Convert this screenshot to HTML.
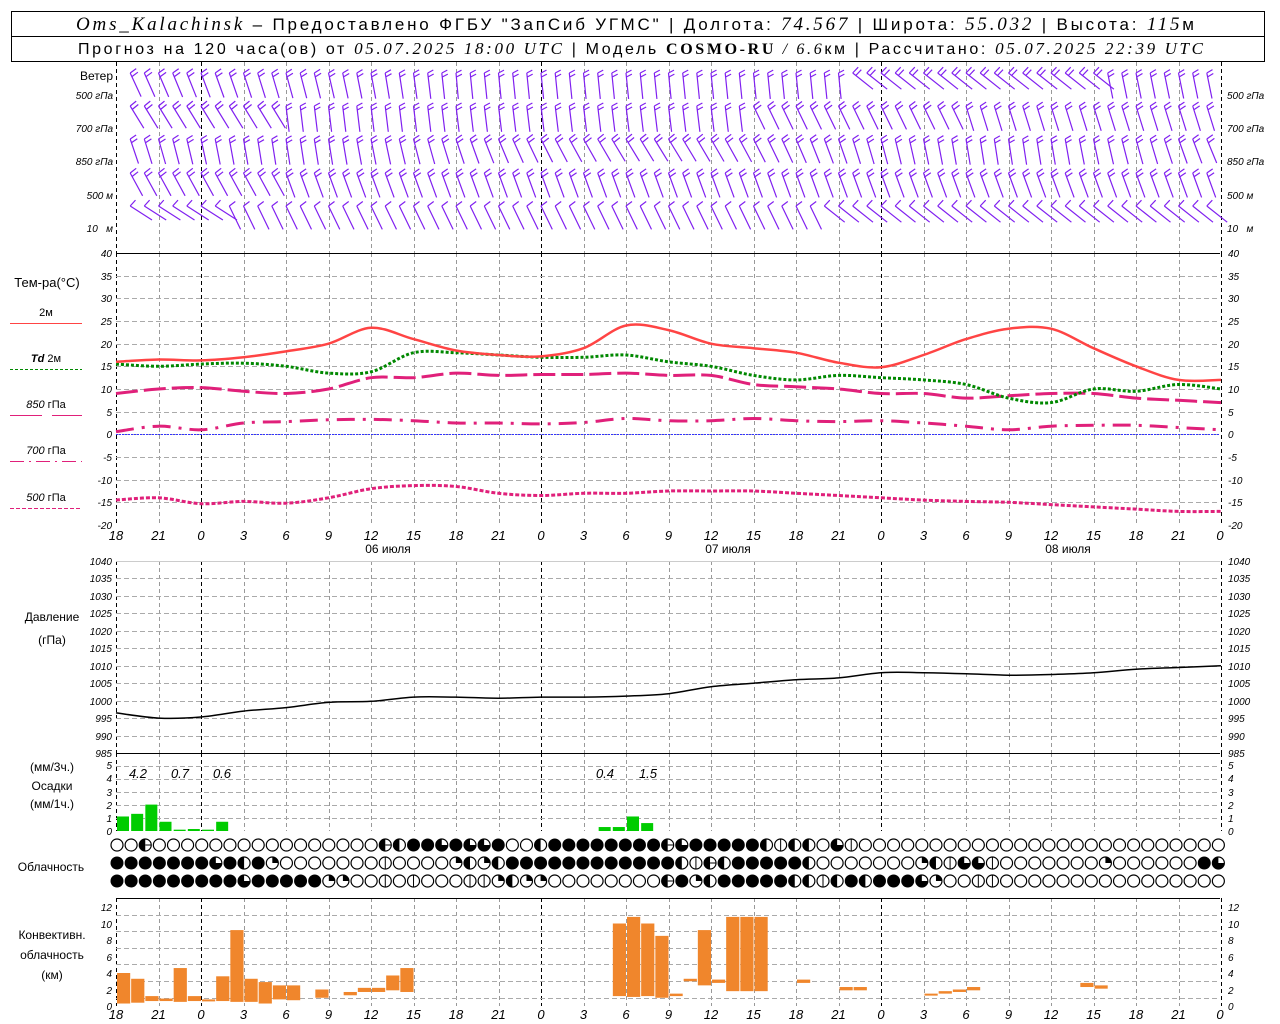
<!DOCTYPE html>
<html><head><meta charset="utf-8"><style>
html,body{margin:0;padding:0;background:#fff;width:1280px;height:1024px;overflow:hidden}
svg{display:block}
.t{font-family:"Liberation Sans",sans-serif;font-size:12px;fill:#000}
.n{font-family:"Liberation Sans",sans-serif;font-style:italic;font-size:10px;fill:#000}
.tl{font-family:"Liberation Sans",sans-serif;font-style:italic;font-size:13px;fill:#000}
.h{font-family:"Liberation Sans",sans-serif;font-size:17px;fill:#000}
.hi{font-family:"Liberation Serif",serif;font-style:italic;font-size:18px;fill:#000}
</style></head><body>
<svg id="s" width="1280" height="1024" xmlns="http://www.w3.org/2000/svg">
<rect x="11.5" y="11.5" width="1253" height="50" fill="none" stroke="#000"/>
<line x1="11" y1="36.5" x2="1265" y2="36.5" stroke="#000"/>
<text x="76" y="30" textLength="1118" lengthAdjust="spacing"><tspan class="hi" style="font-size:19px">Oms_Kalachinsk</tspan><tspan class="h"> – Предоставлено ФГБУ "ЗапСиб УГМС" | Долгота: </tspan><tspan class="hi" style="font-size:19px">74.567</tspan><tspan class="h"> | Широта: </tspan><tspan class="hi" style="font-size:19px">55.032</tspan><tspan class="h"> | Высота: </tspan><tspan class="hi" style="font-size:19px">115</tspan><tspan class="h">м</tspan></text>
<text x="78" y="54" textLength="1125" lengthAdjust="spacing"><tspan class="h" style="font-size:16px">Прогноз на 120 часа(ов) от </tspan><tspan class="hi" style="font-size:17px">05.07.2025 18:00 UTC</tspan><tspan class="h" style="font-size:16px">  | Модель </tspan><tspan class="hi" style="font-weight:bold;font-style:normal;font-size:16px">COSMO-RU</tspan><tspan class="hi" style="font-size:16px"> / 6.6</tspan><tspan class="h" style="font-size:16px">км | Рассчитано: </tspan><tspan class="hi" style="font-size:17px">05.07.2025 22:39 UTC</tspan></text>
<g id="grid"></g><g id="data"></g>
<g class="t" text-anchor="end"><text x="113" y="80">Ветер</text></g>
<g class="n" text-anchor="end"><text x="113" y="99">500 гПа</text><text x="113" y="132">700 гПа</text><text x="113" y="165">850 гПа</text><text x="113" y="199">500 м</text><text x="113" y="232">10 &#160; м</text></g>
<g class="n"><text x="1227" y="99">500 гПа</text><text x="1227" y="132">700 гПа</text><text x="1227" y="165">850 гПа</text><text x="1227" y="199">500 м</text><text x="1227" y="232">10 &#160; м</text></g>
<g class="t" text-anchor="middle"><text x="47" y="287" style="font-size:13px">Тем-ра(°C)</text><text x="46" y="316" style="font-size:11px">2м</text><text x="46" y="362" style="font-size:11px"><tspan font-style="italic" font-weight="bold">Td</tspan>  2м</text><text x="46" y="408" style="font-size:11px"><tspan font-style="italic">850</tspan> гПа</text><text x="46" y="454" style="font-size:11px"><tspan font-style="italic">700</tspan> гПа</text><text x="46" y="501" style="font-size:11px"><tspan font-style="italic">500</tspan> гПа</text>
<text x="52" y="621">Давление</text><text x="52" y="644">(гПа)</text>
<text x="52" y="771">(мм/3ч.)</text><text x="52" y="790">Осадки</text><text x="52" y="808">(мм/1ч.)</text>
<text x="51" y="871">Облачность</text>
<text x="52" y="939">Конвективн.</text><text x="52" y="959">облачность</text><text x="52" y="979">(км)</text></g>
<g stroke-width="1"><line x1="10" y1="323.5" x2="82" y2="323.5" stroke="#f44"/><line x1="10" y1="369.5" x2="82" y2="369.5" stroke="#080" stroke-dasharray="3,2"/><line x1="10" y1="415.5" x2="42" y2="415.5" stroke="#e0207a"/><line x1="52" y1="415.5" x2="82" y2="415.5" stroke="#e0207a"/><line x1="10" y1="461.5" x2="82" y2="461.5" stroke="#e0207a" stroke-dasharray="14,5,2,5"/><line x1="10" y1="508.5" x2="82" y2="508.5" stroke="#e0207a" stroke-dasharray="4,2"/></g>
<g class="n" text-anchor="end">
<text x="112" y="257">40</text><text x="112" y="280">35</text><text x="112" y="302">30</text><text x="112" y="325">25</text><text x="112" y="348">20</text><text x="112" y="370">15</text><text x="112" y="393">10</text><text x="112" y="416">5</text><text x="112" y="438">0</text><text x="112" y="461">-5</text><text x="112" y="484">-10</text><text x="112" y="506">-15</text><text x="112" y="529">-20</text>
<text x="112" y="565">1040</text><text x="112" y="582">1035</text><text x="112" y="600">1030</text><text x="112" y="617">1025</text><text x="112" y="635">1020</text><text x="112" y="652">1015</text><text x="112" y="670">1010</text><text x="112" y="687">1005</text><text x="112" y="705">1000</text><text x="112" y="722">995</text><text x="112" y="740">990</text><text x="112" y="757">985</text>
<text x="112" y="769">5</text><text x="112" y="782">4</text><text x="112" y="796">3</text><text x="112" y="809">2</text><text x="112" y="822">1</text><text x="112" y="835">0</text>
<text x="112" y="911">12</text><text x="112" y="928">10</text><text x="112" y="944">8</text><text x="112" y="961">6</text><text x="112" y="977">4</text><text x="112" y="994">2</text><text x="112" y="1010">0</text>
</g>
<g class="n">
<text x="1228" y="257">40</text><text x="1228" y="280">35</text><text x="1228" y="302">30</text><text x="1228" y="325">25</text><text x="1228" y="348">20</text><text x="1228" y="370">15</text><text x="1228" y="393">10</text><text x="1228" y="416">5</text><text x="1228" y="438">0</text><text x="1228" y="461">-5</text><text x="1228" y="484">-10</text><text x="1228" y="506">-15</text><text x="1228" y="529">-20</text>
<text x="1228" y="565">1040</text><text x="1228" y="582">1035</text><text x="1228" y="600">1030</text><text x="1228" y="617">1025</text><text x="1228" y="635">1020</text><text x="1228" y="652">1015</text><text x="1228" y="670">1010</text><text x="1228" y="687">1005</text><text x="1228" y="705">1000</text><text x="1228" y="722">995</text><text x="1228" y="740">990</text><text x="1228" y="757">985</text>
<text x="1228" y="769">5</text><text x="1228" y="782">4</text><text x="1228" y="796">3</text><text x="1228" y="809">2</text><text x="1228" y="822">1</text><text x="1228" y="835">0</text>
<text x="1228" y="911">12</text><text x="1228" y="928">10</text><text x="1228" y="944">8</text><text x="1228" y="961">6</text><text x="1228" y="977">4</text><text x="1228" y="994">2</text><text x="1228" y="1010">0</text>
</g>
<g class="tl" text-anchor="middle">
<text x="116" y="540">18</text><text x="158.5" y="540">21</text><text x="201" y="540">0</text><text x="243.5" y="540">3</text><text x="286" y="540">6</text><text x="328.5" y="540">9</text><text x="371" y="540">12</text><text x="413.5" y="540">15</text><text x="456" y="540">18</text><text x="498.5" y="540">21</text><text x="541" y="540">0</text><text x="583.5" y="540">3</text><text x="626" y="540">6</text><text x="668.5" y="540">9</text><text x="711" y="540">12</text><text x="753.5" y="540">15</text><text x="796" y="540">18</text><text x="838.5" y="540">21</text><text x="881" y="540">0</text><text x="923.5" y="540">3</text><text x="966" y="540">6</text><text x="1008.5" y="540">9</text><text x="1051" y="540">12</text><text x="1093.5" y="540">15</text><text x="1136" y="540">18</text><text x="1178.5" y="540">21</text><text x="1220" y="540">0</text>
<text x="116" y="1019">18</text><text x="158.5" y="1019">21</text><text x="201" y="1019">0</text><text x="243.5" y="1019">3</text><text x="286" y="1019">6</text><text x="328.5" y="1019">9</text><text x="371" y="1019">12</text><text x="413.5" y="1019">15</text><text x="456" y="1019">18</text><text x="498.5" y="1019">21</text><text x="541" y="1019">0</text><text x="583.5" y="1019">3</text><text x="626" y="1019">6</text><text x="668.5" y="1019">9</text><text x="711" y="1019">12</text><text x="753.5" y="1019">15</text><text x="796" y="1019">18</text><text x="838.5" y="1019">21</text><text x="881" y="1019">0</text><text x="923.5" y="1019">3</text><text x="966" y="1019">6</text><text x="1008.5" y="1019">9</text><text x="1051" y="1019">12</text><text x="1093.5" y="1019">15</text><text x="1136" y="1019">18</text><text x="1178.5" y="1019">21</text><text x="1220" y="1019">0</text>
<text x="138" y="778">4.2</text><text x="180" y="778">0.7</text><text x="222" y="778">0.6</text><text x="605" y="778">0.4</text><text x="648" y="778">1.5</text>
</g>
<g class="t" text-anchor="middle" style="font-size:12px"><text x="388" y="553">06 июля</text><text x="728" y="553">07 июля</text><text x="1068" y="553">08 июля</text></g>
</svg>
<script>
(function(){
var NS="http://www.w3.org/2000/svg",G=document.getElementById('grid'),D=document.getElementById('data');
function el(p,t,a){var e=document.createElementNS(NS,t);for(var k in a)e.setAttribute(k,a[k]);p.appendChild(e);return e;}
function X(h){return 116+h*42.5/3;}
var panels=[[62,253],[253,525],[561,753],[753,831],[898,1006]];
for(var i=0;i<=26;i++){var x=Math.round(X(i*3))+.5,blk=(i%8==2)||i==0||i==26;
 panels.forEach(function(p){el(G,'line',{x1:x,y1:p[0],x2:x,y2:p[1],stroke:blk?'#000':'#999','stroke-dasharray':'4,3'});});}
function hl(y0,y1,n){for(var j=1;j<n;j++){var y=Math.round(y0+(y1-y0)*j/n)+.5;el(G,'line',{x1:116,y1:y,x2:1220,y2:y,stroke:'#aaa','stroke-dasharray':'5,3'});}}
hl(253,525,12);hl(561,753,11);hl(753,831,6);hl(898,1006,6.5);
[253,753,898].forEach(function(y){el(G,'line',{x1:116,y1:y+.5,x2:1220,y2:y+.5,stroke:'#000'});});
el(G,'line',{x1:116,y1:561.5,x2:1220,y2:561.5,stroke:'#ccc'});
el(G,'line',{x1:116,y1:434.5,x2:1220,y2:434.5,stroke:'#33f','stroke-dasharray':'2,1'});
function ty(v){return 253+(40-v)*272/60;}
function line(pts,f,st){var P=pts.map(function(v,i){return [X(i*3),f(v)];});var d='M'+P[0][0]+','+P[0][1];
 for(var i=0;i<P.length-1;i++){var p0=P[Math.max(0,i-1)],p1=P[i],p2=P[i+1],p3=P[Math.min(P.length-1,i+2)];
  d+='C'+(p1[0]+(p2[0]-p0[0])/6).toFixed(1)+','+(p1[1]+(p2[1]-p0[1])/6).toFixed(1)+' '+(p2[0]-(p3[0]-p1[0])/6).toFixed(1)+','+(p2[1]-(p3[1]-p1[1])/6).toFixed(1)+' '+p2[0].toFixed(1)+','+p2[1].toFixed(1);}
 var a={d:d,fill:'none'};for(var k in st)a[k]=st[k];el(D,'path',a);}
line([-14.5,-14,-15.3,-14.8,-15.2,-14,-12,-11.3,-11.5,-13,-13.5,-13,-13,-12.5,-12.5,-12.5,-13,-13.5,-14,-14.5,-14.8,-15,-15.5,-16,-16.5,-17,-17],ty,{stroke:'#e0207a','stroke-width':3,'stroke-dasharray':'4,2'});
line([0.6,1.8,1,2.5,2.8,3.2,3.3,3,2.5,2.5,2.3,2.6,3.5,3,3,3.5,3,2.8,3,2.5,1.8,1,1.8,2,2,1.5,1],ty,{stroke:'#e0207a','stroke-width':3,'stroke-dasharray':'18,8,3,8'});
line([9,10,10.3,9.5,9,10,12.5,12.5,13.5,13,13.2,13.2,13.5,13,13,11,10.5,10,9,9,8,8.5,9,9,8,7.5,7],ty,{stroke:'#e0207a','stroke-width':3,'stroke-dasharray':'22,6'});
line([15.5,15,15.5,15.7,15,13.5,13.8,18,18,17.5,17,17,17.5,16,15,13,12,13,12.5,12,11,8,7,10,9.5,11,10],ty,{stroke:'#080','stroke-width':3,'stroke-dasharray':'3,2'});
line([16,16.5,16.3,17,18.3,20,23.5,21,18.5,17.5,17.2,19,24,23,20,19,18,15.8,14.8,17.5,21,23.3,23.3,19,15,12,12],ty,{stroke:'#f44','stroke-width':2.5});
line([996.5,995,995.3,997,998,999.5,999.8,1001,1001,1000.7,1001,1001,1001.3,1002,1004,1005,1006,1006.5,1008,1008,1007.7,1007.3,1007.5,1008,1009,1009.5,1010],function(v){return 561+(1040-v)*192/55;},{stroke:'#000','stroke-width':1.5});
[[0,1.1],[1,1.3],[2,2],[3,0.7],[4,0.1],[5,0.15],[6,0.1],[7,0.7],[34,0.3],[35,0.3],[36,1.1],[37,0.6]].forEach(function(b){var x=X(b[0])+1,h=b[1]*13.2;el(D,'rect',{x:x,y:831-h,width:12,height:h,fill:'#0c0'});});
function cy(v){return 1006-v*99/12;}
[[0,.3,4],[1,.4,3.3],[2,.6,1.2],[3,.6,.9],[4,.5,4.6],[5,.6,1.2],[6,.6,.8],[7,.6,3.6],[8,.5,9.2],[9,.5,3.3],[10,.3,2.9],[11,.8,2.5],[12,.7,2.5],[14,1,2],[16,1.3,1.7],[17,1.7,2.2],[18,1.7,2.2],[19,1.9,3.7],[20,1.7,4.6],
[35,1.2,10],[36,1.1,10.8],[37,1.2,10],[38,1,8.5],[39,1.2,1.5],[40,3,3.3],[41,2.5,9.2],[42,2.8,3.2],[43,1.8,10.8],[44,1.8,10.8],[45,1.8,10.8],[48,2.8,3.2],[51,1.9,2.3],[52,1.9,2.3],[57,1.3,1.5],[58,1.5,1.8],[59,1.7,2],[60,1.9,2.3],[68,2.3,2.8],[69,2.1,2.5]].forEach(function(b){var x=X(b[0])+1,y=cy(b[2]),h=Math.max(2,cy(b[1])-y);el(D,'rect',{x:x,y:y,width:13.2,height:h,fill:'#f0862c'});});
var rows=["ooHooooooooooooooooHhffTfTTfoohffffffffHTfffffh|hhoT|oooooooooooooooooooooooooo",
"fffffffTfhfqooooooo|ooooqhqhffffffffffffh|Hhfffffhoooooooqh|TT|oooooooqoooooofT",
"fffffffffTfffffqqoo|o|ooo||qhqqooooooooHfqhfffffhh|hfhfffTqoo||oooooooooooooooo"];
var ys=[845,863,881],r=6;
rows.forEach(function(s,ri){for(var i=0;i<79;i++){var c=s[i]||'o',cx=117+i*14.12,y=ys[ri];
 if(c=='f'){el(D,'circle',{cx:cx,cy:y,r:r+.5,fill:'#000'});continue;}
 el(D,'circle',{cx:cx,cy:y,r:r,fill:'#fff',stroke:'#000','stroke-width':1.2});
 if(c=='h'||c=='H')el(D,'path',{d:'M'+cx+','+(y-r)+'A'+r+','+r+' 0 0 0 '+cx+','+(y+r)+'Z',fill:'#000'});
 if(c=='H')el(D,'line',{x1:cx,y1:y,x2:cx+r,y2:y,stroke:'#000'});
 if(c=='q')el(D,'path',{d:'M'+cx+','+y+'V'+(y-r)+'A'+r+','+r+' 0 0 1 '+(cx+r)+','+y+'Z',fill:'#000'});
 if(c=='T')el(D,'path',{d:'M'+cx+','+y+'H'+(cx+r)+'A'+r+','+r+' 0 1 1 '+cx+','+(y-r)+'Z',fill:'#000'});
 if(c=='|')el(D,'line',{x1:cx,y1:y-r,x2:cx,y2:y+r,stroke:'#000'});
}});
var wy=[99,132,165,199,232];
function ang(r,h){
 if(r==0){if(h<25)return 0.45-0.015*h; if(h<52)return 0.1; if(h<70)return 0.9; return 0.2;}
 if(r==1){if(h<12)return 0.55; if(h<45)return 0.12; if(h<60)return 0.45; return 0.3;}
 if(r==2){return 0.35-0.2*Math.sin(h/8);}
 if(r==3){if(h<12)return 0.5;return 0.35;}
 if(h<8)return 1.0; if(h<50)return 0.45; return 0.9;}
for(var r2=0;r2<5;r2++){for(var h=1;h<78;h++){var a=ang(r2,h),L=26,tx=X(h),tyy=wy[r2]-26,bx=tx+L*Math.sin(a),by=tyy+L*Math.cos(a);
 var d='M'+bx.toFixed(1)+','+by.toFixed(1)+'L'+tx.toFixed(1)+','+tyy.toFixed(1);
 var n=(r2==4)?1:2;
 for(var k=0;k<n;k++){var px=tx+k*4*Math.sin(a),py=tyy+k*4*Math.cos(a);d+='M'+px.toFixed(1)+','+py.toFixed(1)+'l'+(6*Math.cos(a-0.5)).toFixed(1)+','+(-6*Math.sin(a+0.4)).toFixed(1);}
 el(D,'path',{d:d,fill:'none',stroke:'#8020f0','stroke-width':1.2});}}
})();
</script>
</body></html>
